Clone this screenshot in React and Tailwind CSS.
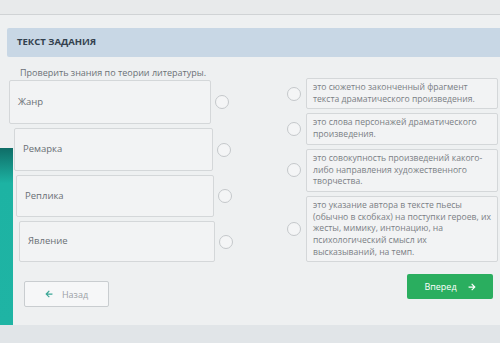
import React from "react";
import { FaArrowLeft, FaArrowRight } from "react-icons/fa";

const terms = [
  { label: "Жанр", box: "ml-0 w-[202px] h-[44px]", circle: "ml-[4px]" },
  { label: "Ремарка", box: "ml-[5px] w-[199px] h-[43px]", circle: "ml-[4px]" },
  { label: "Реплика", box: "ml-[7px] w-[198px] h-[42px]", circle: "ml-[4px]" },
  { label: "Явление", box: "ml-[10px] w-[196px] h-[41px]", circle: "ml-[4px]" },
];

const definitions = [
  "это сюжетно законченный фрагмент текста драматического произведения.",
  "это слова персонажей драматического произведения.",
  "это совокупность произведений какого-либо направления художественного творчества.",
  "это указание автора в тексте пьесы (обычно в скобках) на поступки героев, их жесты, мимику, интонацию, на психологический смысл их высказываний, на темп.",
];

const Circle = ({ className = "" }) => (
  <div className={`w-[14px] h-[14px] shrink-0 rounded-full border border-[#c4c8cb] bg-[#f4f5f6] ${className}`} />
);

const App = () => {
  return (
    <div className="w-[500px] h-[343px] overflow-hidden bg-[#e1e5e8] font-['Open_Sans',sans-serif]">
      {/* top strip */}
      <div className="h-[15px] bg-[#e8eaeb] border-b border-[#d0d3d5]" />

      {/* main */}
      <div className="h-[310px] pt-[13px] bg-[#eef0f1] bg-[linear-gradient(180deg,#0f6d67,#1db3a3_20%,#1fb4a4)] bg-no-repeat bg-[length:13px_177px] bg-[position:0px_133px]">
        <div className="ml-[7px] h-[29px] flex items-center pl-[10px] bg-[#c8d7e5] rounded-l-[2px] text-[9.5px] font-bold text-[#33414e]">
          ТЕКСТ ЗАДАНИЯ
        </div>

        <p className="mt-[10px] ml-[20px] text-[9px] leading-[11px] text-[#6b7176]">
          Проверить знания по теории литературы.
        </p>

        <div className="flex items-start">
          {/* left column */}
          <div className="ml-[9px] mt-[2px] flex flex-col gap-[4px]">
            {terms.map((t) => (
              <div key={t.label} className="flex items-center">
                <div className={`${t.box} flex items-center pl-[8px] bg-[#f2f3f4] border border-[#d4d7d9] rounded-[2px] text-[9.5px] text-[#6a6f74]`}>
                  {t.label}
                </div>
                <Circle className={t.circle} />
              </div>
            ))}
          </div>

          {/* right column */}
          <div className="ml-auto mr-[2px] flex flex-col gap-[4px]">
            {definitions.map((d, i) => (
              <div key={i} className="flex items-center gap-[5px]">
                <Circle />
                <div className="w-[192px] px-[6px] py-[3px] bg-[#f2f3f4] border border-[#d4d7d9] rounded-[2px] text-[8.6px] leading-[11.7px] text-[#7b8085]">
                  {d}
                </div>
              </div>
            ))}
          </div>
        </div>

        {/* buttons */}
        <div className="mt-[12px] flex items-start">
          <button className="mt-[7px] ml-[24px] w-[85px] h-[26px] flex items-center justify-center gap-[9px] bg-[#f6f7f8] border border-[#c9cdd0] rounded-[2px] text-[9px] text-[#9ba1a6]">
            <FaArrowLeft className="text-[#3aa796]" size={8} />
            Назад
          </button>
          <button className="ml-auto mr-[7px] w-[86px] h-[25px] flex items-center justify-center gap-[11px] bg-[#2aae5f] rounded-[2px] text-[9px] text-white">
            Вперед
            <FaArrowRight size={8} />
          </button>
        </div>
      </div>
    </div>
  );
};

export default App;
